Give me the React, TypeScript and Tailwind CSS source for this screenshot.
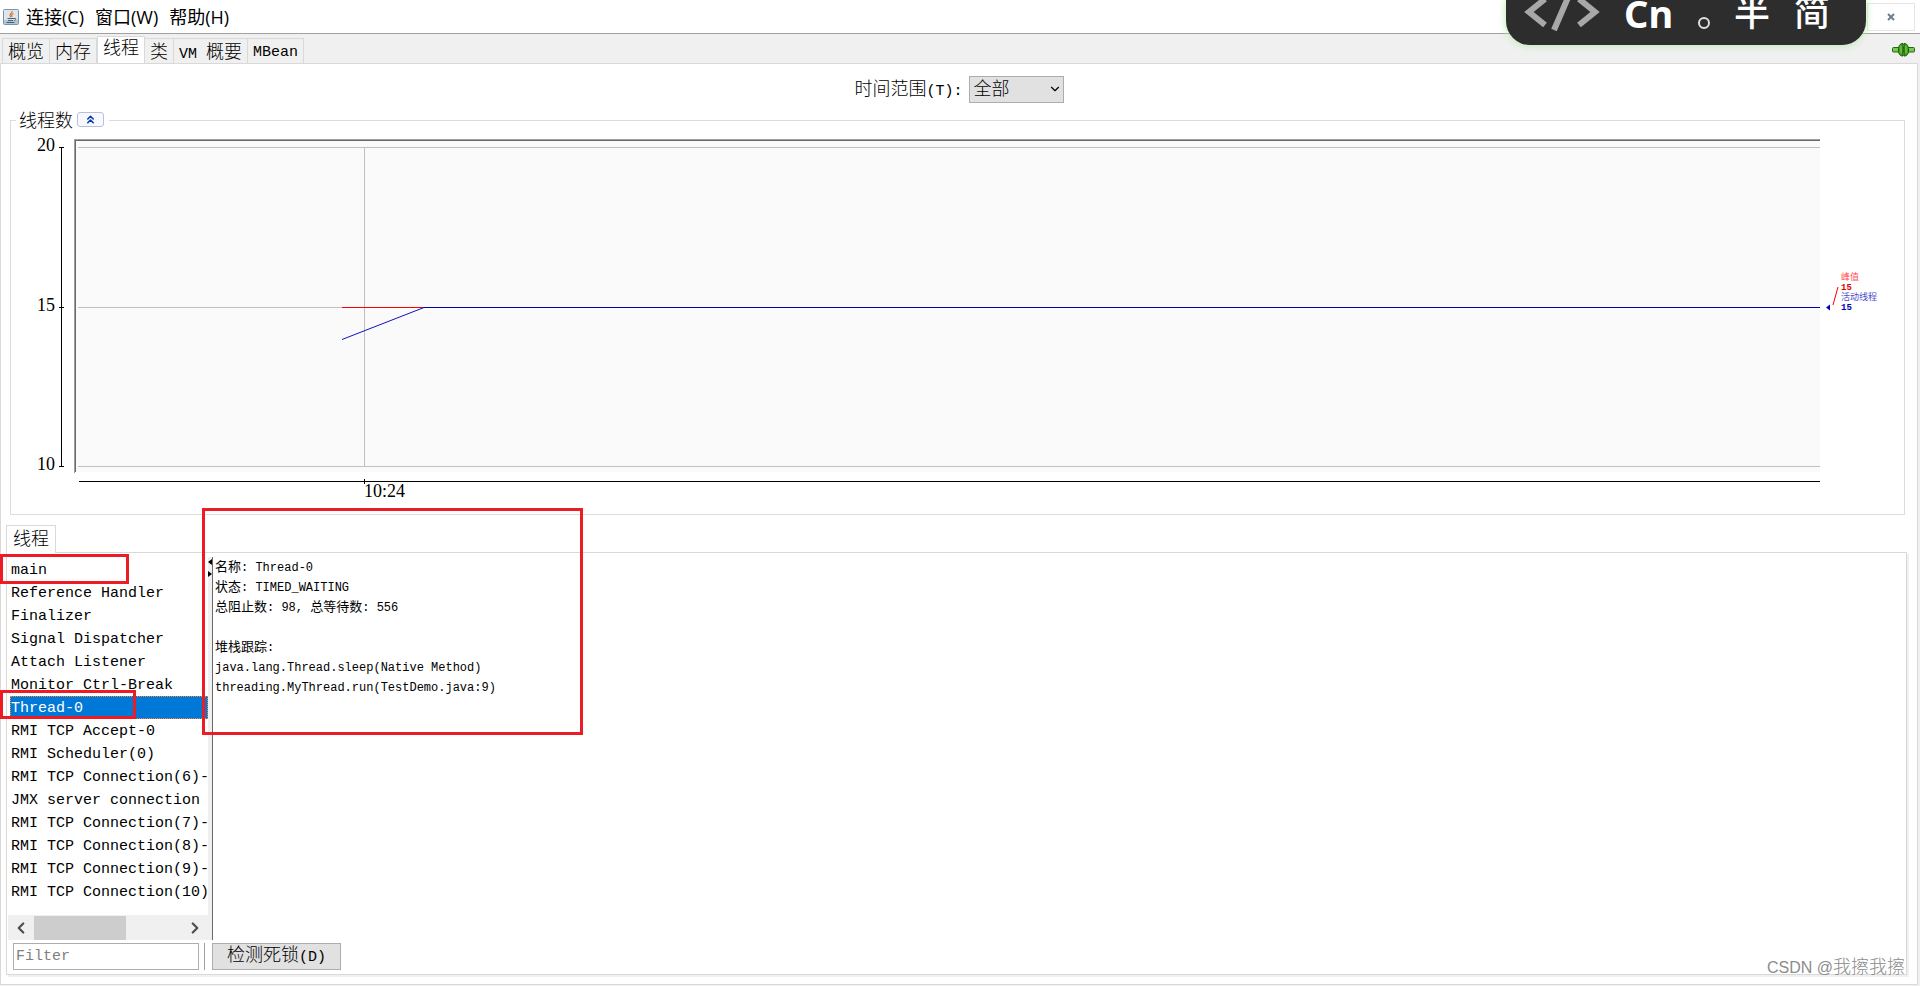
import { useState } from 'react'
import { ChevronDown, ChevronLeft, ChevronRight, ChevronsUp } from 'lucide-react'

const TABS = ['概览', '内存', '线程', '类', 'VM 概要', 'MBean']

const MENUS = ['连接(C)', '窗口(W)', '帮助(H)']

const THREADS = [
  'main',
  'Reference Handler',
  'Finalizer',
  'Signal Dispatcher',
  'Attach Listener',
  'Monitor Ctrl-Break',
  'Thread-0',
  'RMI TCP Accept-0',
  'RMI Scheduler(0)',
  'RMI TCP Connection(6)-',
  'JMX server connection',
  'RMI TCP Connection(7)-',
  'RMI TCP Connection(8)-',
  'RMI TCP Connection(9)-',
  'RMI TCP Connection(10)',
]

const DETAILS = [
  '名称: Thread-0',
  '状态: TIMED_WAITING',
  '总阻止数: 98, 总等待数: 556',
  '',
  '堆栈跟踪:',
  'java.lang.Thread.sleep(Native Method)',
  'threading.MyThread.run(TestDemo.java:9)',
]

// Latin glyphs are wider than half an em, so Chinese runs get their own size
function Mixed({ text, cjk = 'text-[18px]' }: { text: string; cjk?: string }) {
  return (
    <>
      {text.split(/([\u4e00-\u9fff]+)/).map((part, i) =>
        i % 2 === 1 ? <span key={i} className={cjk}>{part}</span> : part
      )}
    </>
  )
}

function JavaIcon() {
  return (
    <svg width="16" height="16" viewBox="0 0 16 16" fill="none">
      <rect x="0.5" y="0.5" width="15" height="15" rx="1" fill="#dce6ee" stroke="#7d92a5" />
      <path d="M1 11h14v4H1z" fill="#b4c6d6" />
      <path d="M9 2c1 2-3 3-2 5l1 1M10.5 4.5C8.5 5.5 8 6.5 9.2 8" stroke="#e8741c" strokeWidth="1.2" />
      <path d="M4.5 9.5h6.5M5 11.5h5M3.5 13.5h8M11 9.5c2.5-.8 2.5 1.5.3 2" stroke="#3d6480" />
    </svg>
  )
}

function PlugIcon() {
  return (
    <svg width="23" height="14" viewBox="0 0 23 14">
      <rect x="0.5" y="4.5" width="22" height="4.5" rx="1" fill="#7fc35a" stroke="#1d6a0c" />
      <path d="M11 0.5C7.5 0.5 6.5 3.5 6.5 7s1 6 4.5 6z" fill="#43a51c" stroke="#155808" />
      <path d="M12 0.5c3.5 0 4.5 3 4.5 6.5s-1 6-4.5 6z" fill="#43a51c" stroke="#155808" />
      <path d="M9 3v7M14 3v7" stroke="#86d05c" />
    </svg>
  )
}

function MenuBar() {
  return (
    <header className="flex h-[34px] items-center border-b border-[#a0a0a0] bg-white pl-[3px] pr-[5px]">
      <JavaIcon />
      <nav className="ml-[7px] flex flex-1 gap-[11px] font-['Open_Sans','Noto_Sans_CJK_SC',sans-serif] text-[18px] font-normal leading-6">
        {MENUS.map((m) => (
          <button key={m} className="whitespace-nowrap">{m}</button>
        ))}
      </nav>
      <button
        aria-label="关闭"
        className="flex h-7 w-12 items-center justify-center border border-[#e5e5e5] bg-white"
      >
        <svg width="8" height="8" viewBox="0 0 8 8" stroke="#6f7f8f" strokeWidth="2">
          <path d="M1 1l6 6M7 1L1 7" />
        </svg>
      </button>
    </header>
  )
}

function ImeBar() {
  return (
    <div className="absolute right-[54px] top-0 h-[45px] w-[360px] overflow-hidden rounded-b-3xl bg-[#2d2d2d] font-['Noto_Sans','Noto_Sans_CJK_SC',sans-serif] text-white shadow-[0_0_8px_#b5e8a5]">
      <div className="-mt-2 flex items-center pl-[18px]">
        <svg width="76" height="42" viewBox="0 0 76 42" fill="none" stroke="#a8a8a8" strokeWidth="6">
          <path d="M21 7L5 20l16 13M55 7l16 13-16 13M46 1L30 38" />
        </svg>
        <span className="ml-6 w-[74px] text-[38px] font-bold leading-10">Cn</span>
        <span className="mt-5 h-3 w-3 rounded-full border-2 border-[#e0e0e0]" />
        <span className="ml-6 text-[36px] font-medium leading-10">半</span>
        <span className="ml-6 text-[36px] font-medium leading-10">简</span>
      </div>
    </div>
  )
}

function ThreadChart() {
  return (
    <div className="flex h-[374px] font-['Liberation_Serif',serif] text-[18px] font-normal">
      <svg width="63" height="374" className="shrink-0">
        <path d="M50.5 14v320M48 14.5h5M48 174.5h5M48 333.5h5" stroke="#000" />
        <g textAnchor="end">
          <text x="44" y="18">20</text>
          <text x="44" y="178">15</text>
          <text x="44" y="337">10</text>
        </g>
      </svg>
      <svg height="374" className="min-w-0 flex-1">
        <rect x="0" y="6" width="100%" height="333" fill="#fafafa" />
        <path d="M0.5 6v334" stroke="#a0a0a0" />
        <path d="M1.5 7v332" stroke="#696969" />
        <line x1="0" y1="6.5" x2="100%" y2="6.5" stroke="#a0a0a0" />
        <line x1="1" y1="7.5" x2="100%" y2="7.5" stroke="#696969" />
        <g stroke="#c0c0c0">
          <line x1="4" y1="14.5" x2="100%" y2="14.5" />
          <line x1="4" y1="174.5" x2="268" y2="174.5" />
          <line x1="4" y1="333.5" x2="100%" y2="333.5" />
          <line x1="290.5" y1="14" x2="290.5" y2="333" />
        </g>
        <line x1="268" y1="174.5" x2="350" y2="174.5" stroke="#ff0000" />
        <line x1="268" y1="206.5" x2="350" y2="174.5" stroke="#1010c0" />
        <line x1="350" y1="174.5" x2="100%" y2="174.5" stroke="#0000b0" />
        <line x1="5" y1="348.5" x2="100%" y2="348.5" stroke="#000" />
        <path d="M290.5 346v5" stroke="#000" />
        <text x="290" y="364">10:24</text>
      </svg>
      <svg width="84" height="374" className="shrink-0 font-['Liberation_Mono','Noto_Sans_CJK_SC',monospace] text-[9px]">
        <path d="M13 172l5-18" stroke="#ff0000" />
        <path d="M6 174.5l4-3v6z" fill="#0000b0" />
        <text x="21" y="147" fill="#ff5050">峰值</text>
        <text x="21" y="157" fill="#e00000" className="font-bold">15</text>
        <text x="21" y="167" fill="#4c4ccc">活动线程</text>
        <text x="21" y="177" fill="#0000b0" className="font-bold">15</text>
      </svg>
    </div>
  )
}

function ThreadList() {
  const [selected, setSelected] = useState('Thread-0')

  return (
    <div className="flex w-[200px] shrink-0 flex-col justify-between">
      <ul className="pl-[2px] pt-[5px]">
        {THREADS.map((name) => (
          <li key={name}>
            <button
              onClick={() => setSelected(name)}
              className={`block h-[23px] w-full whitespace-nowrap border border-dotted text-left text-[15px] leading-6 ${
                name === selected
                  ? 'border-[#ff8728] bg-[#0078d7] text-white'
                  : 'border-transparent text-black'
              }`}
            >
              {name}
            </button>
          </li>
        ))}
      </ul>
      <div className="flex h-[25px] items-center bg-[#f0f0f0] text-[#505050]">
        <button aria-label="向左滚动" className="flex w-[26px] justify-center">
          <ChevronLeft size={18} strokeWidth={3} />
        </button>
        <div className="h-6 flex-1">
          <div className="h-6 w-[92px] bg-[#cdcdcd]" />
        </div>
        <button aria-label="向右滚动" className="flex w-[26px] justify-center">
          <ChevronRight size={18} strokeWidth={3} />
        </button>
      </div>
    </div>
  )
}

export default function App() {
  const [tab, setTab] = useState('线程')

  return (
    <div className="relative flex min-h-screen flex-col overflow-hidden bg-[#f0f0f0] font-['Liberation_Mono','Noto_Sans_CJK_SC',monospace] text-[15px] font-light text-black">
      <MenuBar />
      <ImeBar />

      <div className="flex h-[29px] items-end pl-[2px] pr-[5px]">
        {TABS.map((t) => (
          <button
            key={t}
            onClick={() => setTab(t)}
            className={`whitespace-nowrap border-[#d9d9d9] ${
              t === tab
                ? '-mb-px h-[28px] border-x border-t bg-white px-[5px] pb-px leading-6'
                : 'h-[25px] border-r border-t px-[5px] pt-[3px] leading-[22px] first:border-l'
            }`}
          >
            <Mixed text={t} />
          </button>
        ))}
        <span className="mb-[6px] ml-auto">
          <PlugIcon />
        </span>
      </div>

      <main className="mb-px mr-[2px] flex flex-1 flex-col border border-[#d9d9d9] bg-white">
        <div className="flex h-[48px] items-center justify-center gap-[6px] pt-[3px]">
          <label htmlFor="range" className="whitespace-nowrap pt-[2px]">
            <Mixed text="时间范围(T):" />
          </label>
          <div className="relative">
            <select
              id="range"
              className="block h-[27px] w-[95px] appearance-none border border-[#adadad] bg-[#e1e1e1] pl-1 text-[18px] leading-6"
            >
              <option>全部</option>
            </select>
            <ChevronDown size={14} className="pointer-events-none absolute right-[2px] top-[6px]" />
          </div>
        </div>

        <section className="ml-[9px] mr-3">
          <div className="flex h-[21px] items-start">
            <span className="h-[13px] w-[6px] self-end border-l border-t border-[#dcdcdc]" />
            <span className="ml-[3px] text-[18px] leading-5">线程数</span>
            <button
              aria-label="折叠"
              className="ml-1 flex h-[15px] w-[27px] items-center justify-center rounded-[3px] border border-[#b9bee0] bg-[#f8f9ff] text-[#0a3ca0]"
            >
              <ChevronsUp size={13} strokeWidth={3} />
            </button>
            <span className="ml-[5px] h-[13px] flex-1 self-end border-r border-t border-[#dcdcdc]" />
          </div>
          <div className="border-x border-b border-[#dcdcdc] pb-[7px]">
            <ThreadChart />
          </div>
        </section>

        <section className="relative mb-[9px] ml-[5px] mr-[10px] mt-[10px] flex flex-1 flex-col">
          <div className="flex">
            <button className="relative z-10 -mb-px h-[28px] w-[50px] border-x border-t border-[#d9d9d9] bg-white text-[18px] leading-[26px]">
              线程
            </button>
          </div>
          <div className="flex flex-1 flex-col border border-[#d9d9d9] pl-px shadow-[2px_2px_0_#f0f0f0]">
            <div className="flex flex-1">
              <ThreadList />
              <div className="mt-1 w-[5px] border-r border-[#696969] bg-[#f0f0f0]">
                <svg width="4" height="20" viewBox="0 0 4 20">
                  <path d="M4 2L0 5l4 3zM0 14l4 3-4 3z" fill="#000" />
                </svg>
              </div>
              <div className="flex-1 pl-[2px] pt-[5px] font-normal">
                {DETAILS.map((line, i) => (
                  <p key={i} className="h-5 whitespace-pre text-[12px] leading-5">
                    <Mixed text={line} cjk="text-[13px]" />
                  </p>
                ))}
              </div>
            </div>
            <div className="flex h-[34px] items-start pt-[3px]">
              <input
                aria-label="Filter"
                placeholder="Filter"
                className="ml-[5px] h-[27px] w-[186px] border border-[#adadad] bg-white px-[2px] text-[15px] outline-none placeholder:text-[#808080]"
              />
              <span className="ml-[5px] h-[27px] w-px bg-[#a0a0a0]" />
              <button className="ml-[7px] h-[27px] w-[129px] whitespace-nowrap border border-[#adadad] bg-[#e1e1e1] leading-6">
                <Mixed text="检测死锁(D)" />
              </button>
            </div>
          </div>

          {/* red marks over the list and the stack trace */}
          <div className="pointer-events-none absolute -left-[6px] top-[29px] h-[30px] w-[129px] border-[3px] border-[#ed1c24]" />
          <div className="pointer-events-none absolute -left-[6px] top-[165px] h-[29px] w-[136px] border-[3px] border-[#ed1c24]" />
          <div className="pointer-events-none absolute -top-[17px] left-[196px] z-10 h-[227px] w-[381px] border-[3px] border-[#ed1c24]" />
        </section>
      </main>

      <div className="absolute bottom-[6px] right-[15px] font-['Liberation_Sans','Noto_Sans_CJK_SC',sans-serif] text-[16px] leading-6 text-[#8c8c8c]">
        <Mixed text="CSDN @我擦我擦" />
      </div>
    </div>
  )
}
